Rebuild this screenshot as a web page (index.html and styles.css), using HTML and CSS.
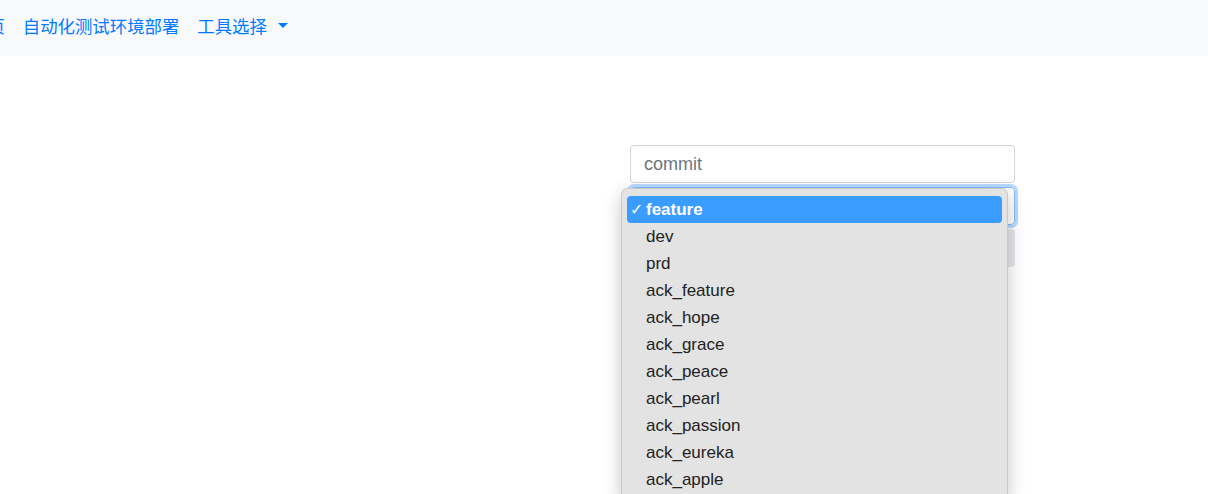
FILE: index.html
```html
<!DOCTYPE html>
<html lang="zh">
<head>
<meta charset="utf-8">
<link rel="stylesheet" href="styles.css">
</head>
<body>
<nav class="navbar">
  <a class="nav-link" href="#">首页</a>
  <a class="nav-link" href="#">自动化测试环境部署</a>
  <a class="nav-link dropdown-toggle" href="#">工具选择<span class="caret"></span></a>
</nav>
<main class="main">
  <form class="form">
    <input class="form-control" type="text" placeholder="commit">
    <div class="select-wrap">
      <div class="form-select"></div>
      <ul class="menu">
        <li class="item active"><span class="check">✓</span><span class="label">feature</span></li>
        <li class="item">dev</li>
        <li class="item">prd</li>
        <li class="item">ack_feature</li>
        <li class="item">ack_hope</li>
        <li class="item">ack_grace</li>
        <li class="item">ack_peace</li>
        <li class="item">ack_pearl</li>
        <li class="item">ack_passion</li>
        <li class="item">ack_eureka</li>
        <li class="item">ack_apple</li>
      </ul>
    </div>
    <div class="btn"></div>
  </form>
</main>
</body>
</html>
```

FILE: styles.css
```css
html, body {
  margin: 0;
  padding: 0;
  background: #fff;
  overflow: hidden;
  height: 494px;
}
body {
  font-family: "Liberation Sans", "Noto Sans CJK SC", Arial, sans-serif;
  font-size: 16px;
  color: #212529;
}
.navbar {
  height: 56px;
  background: #f8f9fa;
  display: flex;
  align-items: center;
  margin-left: -38px;
}
.nav-link {
  font-family: "Noto Sans CJK SC", sans-serif;
  font-size: 17.4px;
  color: #007bff;
  text-decoration: none;
  padding: 0 8px;
  display: flex;
  align-items: center;
  line-height: 24px;
  margin-top: -5px;
}
.nav-link + .nav-link {
  margin-left: 2px;
}
.dropdown-toggle {
  margin-left: 3px;
}
.caret {
  display: inline-block;
  width: 0;
  height: 0;
  margin-left: 11px;
  border-top: 5px solid #007bff;
  border-left: 5px solid transparent;
  border-right: 5px solid transparent;
}
.main {
  padding-top: 89px;
  padding-left: 630px;
}
.form {
  width: 385px;
  display: flex;
  flex-direction: column;
}
.form-control {
  box-sizing: border-box;
  height: 38px;
  width: 100%;
  border: 1px solid #ced4da;
  border-radius: 4px;
  padding: 0 13px;
  font-family: "Liberation Sans", Arial, sans-serif;
  font-size: 18px;
  color: #495057;
  outline: none;
}
.form-control::placeholder {
  color: #6c757d;
}
.select-wrap {
  position: relative;
  margin-top: 4px;
}
.form-select {
  box-sizing: border-box;
  height: 38px;
  border: 1px solid #80bdff;
  border-radius: 4px;
  box-shadow: 0 0 0 3px rgba(0, 123, 255, 0.28);
}
.btn {
  margin-top: 4px;
  height: 38px;
  background: #e4e6e9;
  border-radius: 4px;
}
.menu {
  position: absolute;
  left: -9px;
  top: 1px;
  width: 387px;
  box-sizing: border-box;
  margin: 0;
  padding: 7px 5px;
  list-style: none;
  background: #e3e3e3;
  border: 1px solid #c9c9c9;
  border-radius: 6px;
  box-shadow: 0 6px 18px rgba(0, 0, 0, 0.22);
}
.item {
  height: 27px;
  line-height: 27px;
  padding-left: 19px;
  font-size: 17px;
  color: #222;
  border-radius: 4px;
  display: flex;
  align-items: center;
}
.item.active {
  background: #3a9cff;
  color: #fff;
  font-weight: 600;
  padding-left: 3px;
}
.check {
  width: 16px;
  font-size: 16px;
  font-weight: 400;
  font-family: "DejaVu Sans", sans-serif;
}
```
